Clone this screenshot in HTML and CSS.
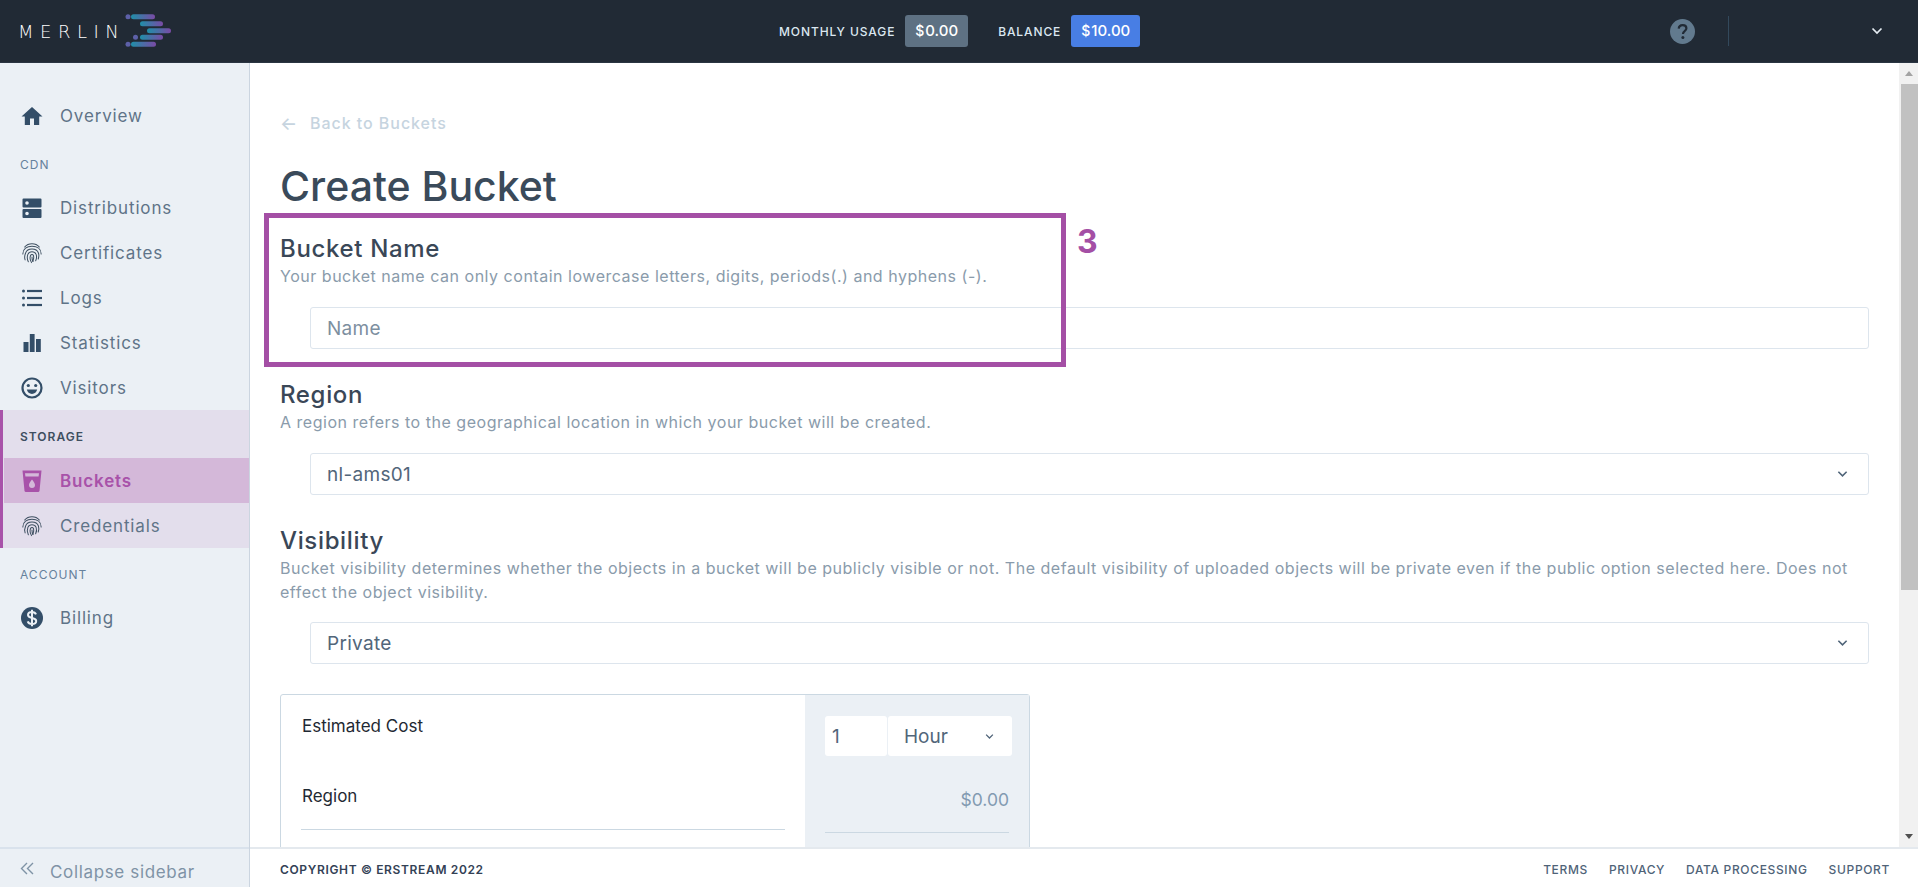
FILE: index.html
```html
<!DOCTYPE html>
<html lang="en">
<head>
<meta charset="utf-8">
<title>Create Bucket - Merlin</title>
<link rel="stylesheet" href="styles.css">
</head>
<body>
<svg class="defs" width="0" height="0" aria-hidden="true">
  <defs>
    <linearGradient id="barfill" x1="0" x2="1" y1="0" y2="0">
      <stop offset="0" stop-color="#1f8fa8"/>
      <stop offset="1" stop-color="#7a4aa5"/>
    </linearGradient>
    <symbol id="fingerprint" viewBox="0 0 24 24">
      <g fill="none" stroke="currentColor" stroke-width="1.100" stroke-linecap="round">
        <path d="M4 5.500C6 3.200 9 2 12 2s6 1.200 8 3.500"/>
        <path d="M2 13C2 7.500 6.500 4.700 12 4.700s10 2.800 10 8.300"/>
        <path d="M4.500 19.500C3.500 17 4 14.500 5 12c1-3 4-4.300 7-4.300s6 1.300 7 4.300c.7 2 .7 4-.2 6.500"/>
        <path d="M8 21.500C6.500 18.500 6.500 16 7.500 13.500c.8-1.800 2.500-2.800 4.500-2.800s3.700 1 4.500 2.800c.8 2.200.6 4.500-.5 7"/>
        <path d="M11.500 22.500C9.800 19.500 9.500 17 10.300 15c.4-.9 1-1.300 1.700-1.300s1.300.4 1.700 1.300c.5 1.800.3 3.800-.7 6"/>
        <path d="M12 16.500c0 1.800.3 3.300 1 4.800"/>
      </g>
    </symbol>
    <symbol id="chevron" viewBox="0 0 12 8">
      <path d="M1.500 1.500 6 6l4.500-4.500" fill="none" stroke="currentColor" stroke-width="1.700"/>
    </symbol>
  </defs>
</svg>

<header class="topbar">
  <div class="logo">
    <span class="logo-word">MERLIN</span>
    <svg class="logo-bars" width="46" height="36" viewBox="0 0 46 36" aria-hidden="true">
      <circle cx="3" cy="3.700" r="2.500" fill="#5d60a8"/>
      <rect x="6" y="1.200" width="24" height="5" rx="2.500" fill="url(#barfill)"/>
      <rect x="15" y="8.200" width="23" height="5" rx="2.500" fill="url(#barfill)"/>
      <rect x="22" y="15.200" width="24" height="5" rx="2.500" fill="url(#barfill)"/>
      <circle cx="10.500" cy="24.300" r="2.500" fill="#5d60a8"/>
      <rect x="15" y="21.800" width="23" height="5" rx="2.500" fill="url(#barfill)"/>
      <circle cx="3" cy="31.300" r="2.500" fill="#5d60a8"/>
      <rect x="6" y="28.800" width="25" height="5" rx="2.500" fill="url(#barfill)"/>
    </svg>
  </div>
  <div class="usage">
    <span class="usage-label">MONTHLY USAGE</span>
    <span class="badge badge-grey"><span class="cur">$</span>0.00</span>
    <span class="usage-label usage-label-second">BALANCE</span>
    <span class="badge badge-blue"><span class="cur">$</span>10.00</span>
  </div>
  <div class="top-right">
    <svg class="help" width="25" height="25" viewBox="0 0 25 25" aria-hidden="true">
      <circle cx="12.500" cy="12.500" r="12.500" fill="#627a8e"/>
      <path d="M8.700 9.700c.2-2.300 1.800-3.600 3.900-3.600 2.200 0 3.800 1.300 3.800 3.200 0 1.500-.8 2.300-1.900 3-1.100.8-1.500 1.300-1.500 2.600" fill="none" stroke="#212a35" stroke-width="2.200"/>
      <circle cx="12.900" cy="18.600" r="1.500" fill="#212a35"/>
    </svg>
    <span class="top-divider"></span>
    <svg class="top-chevron"><use href="#chevron"/></svg>
  </div>
</header>

<div class="body-row">
  <aside class="sidebar">
    <nav class="nav">
      <a class="item">
        <svg class="ico" viewBox="0 0 24 24"><path d="M10 21v-6.500h4V21h5.200v-8.500H22.500L12 3 1.500 12.500h3.300V21z" fill="currentColor"/></svg>
        <span>Overview</span>
      </a>
      <div class="label">CDN</div>
      <a class="item">
        <svg class="ico" viewBox="0 0 24 24"><path fill-rule="evenodd" fill="currentColor" d="M3.500 2.500h17a1 1 0 0 1 1 1v7a1 1 0 0 1-1 1h-17a1 1 0 0 1-1-1v-7a1 1 0 0 1 1-1zM7 5.200a1.800 1.800 0 1 0 0 3.600 1.800 1.800 0 0 0 0-3.600zM3.500 13h17a1 1 0 0 1 1 1v7a1 1 0 0 1-1 1h-17a1 1 0 0 1-1-1v-7a1 1 0 0 1 1-1zM7 15.700a1.800 1.800 0 1 0 0 3.600 1.800 1.800 0 0 0 0-3.600z"/></svg>
        <span>Distributions</span>
      </a>
      <a class="item">
        <svg class="ico ico-print"><use href="#fingerprint"/></svg>
        <span>Certificates</span>
      </a>
      <a class="item">
        <svg class="ico" viewBox="0 0 24 24"><g fill="currentColor"><circle cx="3.500" cy="5" r="1.500"/><circle cx="3.500" cy="12" r="1.500"/><circle cx="3.500" cy="19" r="1.500"/><rect x="7" y="3.900" width="15" height="2.200"/><rect x="7" y="10.900" width="15" height="2.200"/><rect x="7" y="17.900" width="15" height="2.200"/></g></svg>
        <span>Logs</span>
      </a>
      <a class="item">
        <svg class="ico" viewBox="0 0 24 24"><g fill="currentColor"><rect x="3.500" y="11" width="5" height="10"/><rect x="9.800" y="3" width="4.800" height="18"/><rect x="16" y="8" width="4.800" height="13"/></g></svg>
        <span>Statistics</span>
      </a>
      <a class="item">
        <svg class="ico" viewBox="0 0 24 24"><circle cx="12" cy="12" r="9.500" fill="none" stroke="currentColor" stroke-width="2.200"/><circle cx="8.300" cy="9.500" r="1.600" fill="currentColor"/><circle cx="15.700" cy="9.500" r="1.600" fill="currentColor"/><path d="M6.800 13.600h10.400c-.6 2.700-2.600 4.300-5.200 4.300s-4.600-1.600-5.200-4.300z" fill="currentColor"/></svg>
        <span>Visitors</span>
      </a>
      <div class="group">
        <div class="label label-strong">STORAGE</div>
        <a class="item item-active">
          <svg class="ico" viewBox="0 0 24 24"><path fill-rule="evenodd" fill="currentColor" d="M2.500 1.500h19l-2 20.500a1.500 1.500 0 0 1-1.500 1H6a1.500 1.500 0 0 1-1.500-1zM5 4.200l.4 3.300h13.200l.4-3.300zM12 10.500c-1.700 2.200-3 3.700-3 5.500a3 3 0 0 0 6 0c0-1.800-1.300-3.300-3-5.500z"/></svg>
          <span>Buckets</span>
        </a>
        <a class="item">
          <svg class="ico ico-print"><use href="#fingerprint"/></svg>
          <span>Credentials</span>
        </a>
      </div>
      <div class="label">ACCOUNT</div>
      <a class="item">
        <svg class="ico" viewBox="0 0 24 24"><circle cx="12" cy="12" r="11" fill="currentColor"/><path d="M16 8.300c-.6-1.500-2-2.300-4-2.300-2.300 0-4 1.200-4 3.100 0 4 8.200 2 8.200 5.900 0 1.900-1.800 3-4.200 3-2.200 0-3.700-.9-4.300-2.600M12 3.800v16.400" fill="none" stroke="#ebf0f5" stroke-width="2"/></svg>
        <span>Billing</span>
      </a>
    </nav>
    <div class="collapse">
      <svg class="collapse-ico" width="14" height="14" viewBox="0 0 14 14" aria-hidden="true"><path d="M7 1 1.500 6.500 7 12M13 1 7.500 6.500 13 12" fill="none" stroke="currentColor" stroke-width="1.400"/></svg>
      <span>Collapse sidebar</span>
    </div>
  </aside>

  <div class="workspace">
    <div class="scroll-row">
      <main class="main">
        <a class="back"><span class="back-arrow">←</span><span>Back to Buckets</span></a>
        <h1 class="title">Create Bucket</h1>

        <section class="field">
          <h2>Bucket Name</h2>
          <p>Your bucket name can only contain lowercase letters, digits, periods(.) and hyphens (-).</p>
          <div class="control placeholder">Name</div>
        </section>

        <section class="field">
          <h2>Region</h2>
          <p>A region refers to the geographical location in which your bucket will be created.</p>
          <div class="control"><span>nl-ams01</span><svg class="chev"><use href="#chevron"/></svg></div>
        </section>

        <section class="field">
          <h2>Visibility</h2>
          <p>Bucket visibility determines whether the objects in a bucket will be publicly visible or not. The default visibility of uploaded objects will be private even if the public option selected here. Does not<br>effect the object visibility.</p>
          <div class="control control-tight"><span>Private</span><svg class="chev"><use href="#chevron"/></svg></div>
        </section>

        <div class="cost">
          <div class="cost-left">
            <div class="cost-row cost-row-first">Estimated Cost</div>
            <div class="cost-row cost-row-line">Region</div>
          </div>
          <div class="cost-right">
            <div class="period">
              <div class="period-num">1</div>
              <div class="period-unit"><span>Hour</span><svg class="chev chev-small"><use href="#chevron"/></svg></div>
            </div>
            <div class="price">$0.00</div>
          </div>
        </div>

        <div class="note"><span class="note-number">3</span></div>
      </main>
      <div class="scrollbar" aria-hidden="true">
        <div class="sb-btn"><span class="tri tri-up"></span></div>
        <div class="sb-thumb"></div>
        <div class="sb-track"></div>
        <div class="sb-btn"><span class="tri tri-down"></span></div>
      </div>
    </div>
    <footer class="footer">
      <span class="copy">COPYRIGHT © ERSTREAM 2022</span>
      <span class="links"><a>TERMS</a><a>PRIVACY</a><a>DATA PROCESSING</a><a>SUPPORT</a></span>
    </footer>
  </div>
</div>
</body>
</html>
```

FILE: styles.css
```css
* { box-sizing: border-box; }
html, body { margin: 0; height: 100%; overflow: hidden; }
body {
  display: flex;
  flex-direction: column;
  font-family: "Inter", "Liberation Sans", sans-serif;
  font-size: 16px;
  color: #334e68;
  background: #fff;
}
.defs { position: absolute; }

/* top bar */
.topbar {
  height: 63px;
  flex: none;
  display: flex;
  align-items: center;
  background: #212a35;
  border-bottom: 1px solid #2a3542;
  position: relative;
}
.logo { display: flex; align-items: center; margin-left: 18px; width: 400px; }
.logo-word {
  font-family: "DejaVu Sans", "Inter", sans-serif;
  font-size: 18px;
  font-weight: 200;
  letter-spacing: 6.500px;
  color: #fff;
  width: 107px;
  flex: none;
  white-space: nowrap;
}
.logo-bars { display: block; }
.usage {
  display: flex;
  align-items: center;
  margin-left: 361px;
}
.usage-label {
  font-size: 12px;
  font-weight: 500;
  letter-spacing: .9px;
  color: #dbe7f0;
  margin-right: 10px;
}
.usage-label-second { margin-left: 30px; }
.badge {
  height: 32px;
  line-height: 32px;
  border-radius: 3px;
  padding: 0 10px;
  font-size: 15px;
  font-weight: 500;
  color: #fff;
}
.cur { margin-right: 1px; font-size: 14px; }
.badge-grey { background: #5e7183; }
.badge-blue { background: #487ee4; }
.top-right {
  margin-left: auto;
  display: flex;
  align-items: center;
  padding-right: 35px;
}
.help { display: block; }
.top-divider { width: 1px; height: 30px; background: #33495c; margin-left: 33px; margin-right: 142px; }
.top-chevron { width: 12px; height: 8px; color: #e6edf3; display: block; }

/* layout */
.body-row { flex: 1; display: flex; min-height: 0; }

/* sidebar */
.sidebar {
  width: 250px;
  flex: none;
  display: flex;
  flex-direction: column;
  background: #ebf0f5;
  border-right: 1px solid #cbd5e0;
}
.nav { flex: 1; padding-top: 30px; }
.item {
  height: 45px;
  display: flex;
  align-items: center;
  padding-left: 20px;
  color: #5f7488;
  font-size: 17px;
  letter-spacing: .85px;
}
.ico { width: 24px; height: 24px; margin-right: 16px; color: #334e68; flex: none; }
.ico-print { width: 22px; height: 22px; margin: 0 17px 0 1px; color: #3d4f60; }
.label {
  height: 47px;
  display: flex;
  align-items: center;
  padding-left: 20px;
  padding-top: 5px;
  font-size: 12px;
  letter-spacing: 1px;
  color: #66819c;
}
.group {
  background: #e3deec;
  border-left: 3px solid #a852a9;
}
.group .label { height: 48px; padding-left: 17px; }
.label-strong { font-weight: 600; color: #3e4e60; }
.group .item { padding-left: 17px; }
.item-active {
  background: #d4b8d9;
  margin-left: 1px;
  color: #a852a9;
  font-weight: 600;
}
.group .item-active { padding-left: 16px; color: #a852a9; }
.item-active .ico { color: #a852a9; }
.collapse {
  height: 40px;
  flex: none;
  display: flex;
  align-items: center;
  border-top: 2px solid #d9e2ec;
  padding: 8px 0 0 20px;
  color: #7f93a6;
  font-size: 17px;
  letter-spacing: .65px;
}
.collapse-ico { margin-right: 16px; margin-top: -6px; }

/* workspace */
.workspace { flex: 1; min-width: 0; display: flex; flex-direction: column; }
.scroll-row { flex: 1; min-height: 0; display: flex; }
.main {
  flex: 1;
  min-width: 0;
  overflow: hidden;
  padding: 48px 30px 0;
  position: relative;
}
.back {
  display: flex;
  align-items: center;
  height: 24px;
  color: #c6d4df;
  font-weight: 500;
  font-size: 16px;
  letter-spacing: .95px;
}
.back-arrow { width: 30px; font-size: 18px; letter-spacing: 0; }
.title {
  margin: 26px 0 0;
  font-size: 41px;
  line-height: 50px;
  font-weight: 500;
  color: #3a4a5a;
}
.field { margin-top: 0; margin-bottom: 30px; }
.title + .field { margin-top: 22px; }
.field h2 {
  margin: 0;
  font-size: 24px;
  line-height: 31px;
  font-weight: 500;
  letter-spacing: .65px;
  color: #3a4757;
}
.field p {
  margin: 0;
  font-size: 16px;
  line-height: 24px;
  letter-spacing: .52px;
  color: #8a9bab;
}
.control {
  margin: 19px 0 0 30px;
  height: 42px;
  display: flex;
  align-items: center;
  justify-content: space-between;
  border: 1px solid #dde5ed;
  border-radius: 3px;
  padding: 0 20px 0 16px;
  font-size: 19px;
  letter-spacing: .3px;
  color: #52667a;
}
.control-tight { margin-top: 18px; }
.placeholder { color: #7d8f9f; }
.chev { width: 11px; height: 8px; color: #4f6378; }
.chev-small { width: 9px; height: 7px; }
.cost {
  width: 750px;
  display: flex;
  height: 420px;
  border: 1px solid #cbd8e2;
  border-radius: 3px;
}
.cost-left { flex: 1; padding: 0 20px; font-size: 17px; color: #1f2933; }
.cost-row { height: 42px; display: flex; align-items: center; padding-left: 1px; }
.cost-row-first { margin-top: 10px; }
.cost-row-line { margin-top: 28px; height: 55px; padding-bottom: 12px; border-bottom: 1px solid #cbd8e2; }
.cost-right {
  width: 224px;
  background: #ebf0f5;
  padding: 21px 20px 0;
}
.period { display: flex; gap: 1px; height: 40px; margin-right: -3px; }
.period-num {
  width: 62px;
  background: #fff;
  border-radius: 3px;
  display: flex;
  align-items: center;
  padding-left: 7px;
  font-size: 19px;
  color: #52667a;
}
.period-unit {
  flex: 1;
  background: #fff;
  border-radius: 3px;
  display: flex;
  align-items: center;
  justify-content: space-between;
  padding: 0 18px 0 16px;
  font-size: 19px;
  color: #52667a;
}
.price {
  margin-top: 33px;
  height: 44px;
  text-align: right;
  border-bottom: 1px solid #cbd8e2;
  color: #829ab1;
  font-size: 17.500px;
}

/* annotation */
.note {
  position: absolute;
  left: 14px;
  top: 150px;
  width: 802px;
  height: 154px;
  border: 5px solid #a44fa5;
}
.note-number {
  position: absolute;
  left: 808px;
  top: 4px;
  font-size: 32px;
  line-height: 40px;
  font-weight: 700;
  color: #a44fa5;
}

/* scrollbar */
.scrollbar {
  width: 19px;
  flex: none;
  display: flex;
  flex-direction: column;
  background: #f1f1f1;
}
.sb-btn { height: 21px; flex: none; display: flex; align-items: center; justify-content: center; }
.sb-thumb { height: 506px; flex: none; background: #c1c1c1; margin-left: 2px; }
.sb-track { flex: 1; }
.tri { width: 0; height: 0; border-left: 4.500px solid transparent; border-right: 4.500px solid transparent; }
.tri-up { border-bottom: 5px solid #a3a3a3; }
.tri-down { border-top: 5px solid #505050; }

/* footer */
.footer {
  height: 40px;
  flex: none;
  display: flex;
  align-items: center;
  justify-content: space-between;
  border-top: 2px solid #e4e9ee;
  padding: 2px 28px 0 30px;
  font-size: 12px;
  font-weight: 500;
  letter-spacing: .65px;
  color: #3a4757;
}
.copy { font-weight: 600; color: #334155; }
.links { display: flex; gap: 21px; color: #4f6378; }
```
